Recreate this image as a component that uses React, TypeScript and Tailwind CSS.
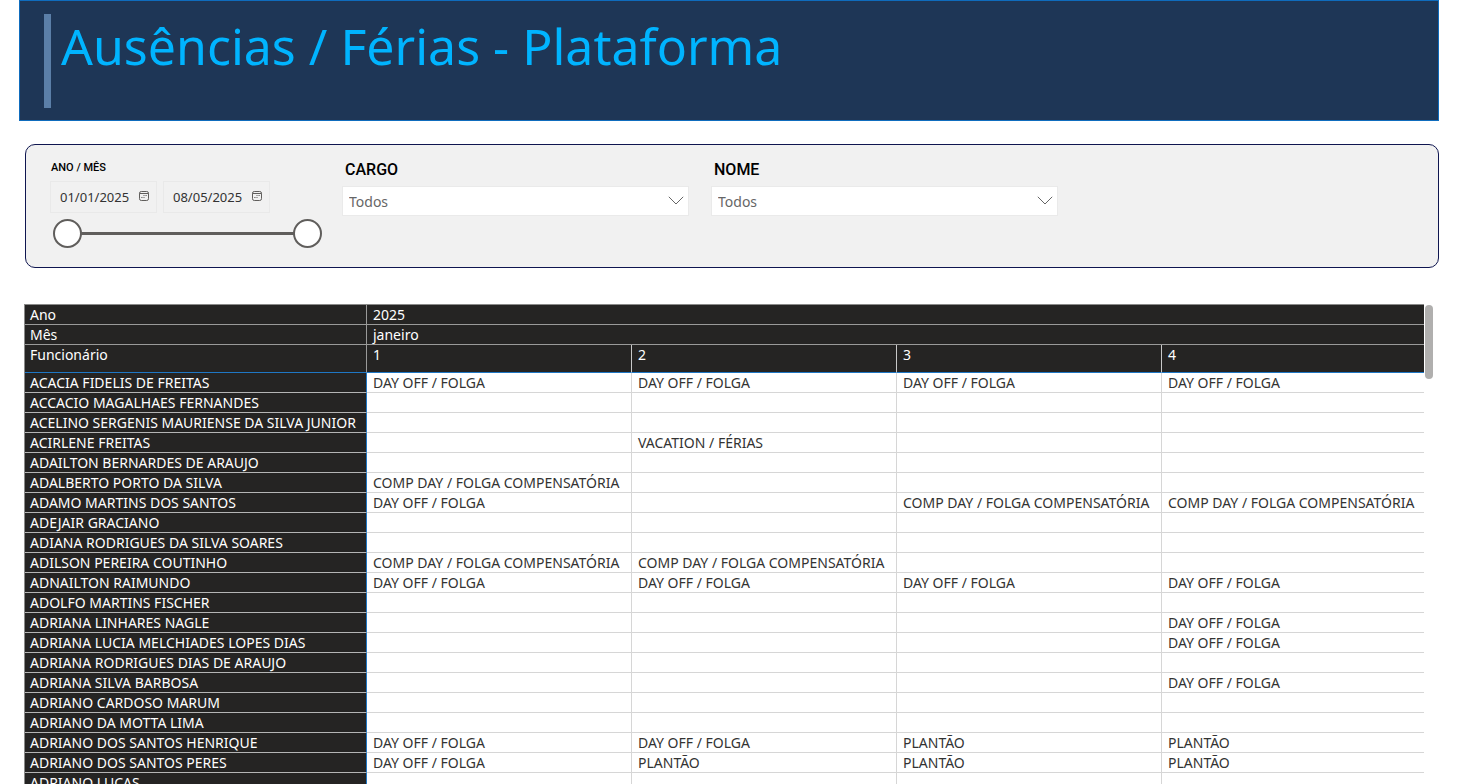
import { useState } from "react";

const DAY_OFF = "DAY OFF / FOLGA";
const COMP = "COMP DAY / FOLGA COMPENSATÓRIA";
const VACATION = "VACATION / FÉRIAS";
const DUTY = "PLANTÃO";

const days = [1, 2, 3, 4];

const employees: { name: string; days: string[] }[] = [
  { name: "ACACIA FIDELIS DE FREITAS", days: [DAY_OFF, DAY_OFF, DAY_OFF, DAY_OFF] },
  { name: "ACCACIO MAGALHAES FERNANDES", days: ["", "", "", ""] },
  { name: "ACELINO SERGENIS MAURIENSE DA SILVA JUNIOR", days: ["", "", "", ""] },
  { name: "ACIRLENE FREITAS", days: ["", VACATION, "", ""] },
  { name: "ADAILTON BERNARDES DE ARAUJO", days: ["", "", "", ""] },
  { name: "ADALBERTO PORTO DA SILVA", days: [COMP, "", "", ""] },
  { name: "ADAMO MARTINS DOS SANTOS", days: [DAY_OFF, "", COMP, COMP] },
  { name: "ADEJAIR GRACIANO", days: ["", "", "", ""] },
  { name: "ADIANA RODRIGUES DA SILVA SOARES", days: ["", "", "", ""] },
  { name: "ADILSON PEREIRA COUTINHO", days: [COMP, COMP, "", ""] },
  { name: "ADNAILTON RAIMUNDO", days: [DAY_OFF, DAY_OFF, DAY_OFF, DAY_OFF] },
  { name: "ADOLFO MARTINS FISCHER", days: ["", "", "", ""] },
  { name: "ADRIANA LINHARES NAGLE", days: ["", "", "", DAY_OFF] },
  { name: "ADRIANA LUCIA MELCHIADES LOPES DIAS", days: ["", "", "", DAY_OFF] },
  { name: "ADRIANA RODRIGUES DIAS DE ARAUJO", days: ["", "", "", ""] },
  { name: "ADRIANA SILVA BARBOSA", days: ["", "", "", DAY_OFF] },
  { name: "ADRIANO CARDOSO MARUM", days: ["", "", "", ""] },
  { name: "ADRIANO DA MOTTA LIMA", days: ["", "", "", ""] },
  { name: "ADRIANO DOS SANTOS HENRIQUE", days: [DAY_OFF, DAY_OFF, DUTY, DUTY] },
  { name: "ADRIANO DOS SANTOS PERES", days: [DAY_OFF, DUTY, DUTY, DUTY] },
  { name: "ADRIANO LUCAS", days: ["", "", "", ""] },
];

function CalendarIcon() {
  return (
    <svg viewBox="0 0 12 12" className="size-3" fill="none" stroke="#605e5c" aria-hidden="true">
      <rect x="1.5" y="1.5" width="9" height="9" rx="1.8" />
      <path d="M1.5 3.5h9" />
      <path d="M5.5 5.5h1M7.5 5.5h1.2M3.3 7.5h1.2M5.5 7.5h1" />
    </svg>
  );
}

function DateField({ label, initial }: { label: string; initial: string }) {
  const [value, setValue] = useState(initial);
  return (
    <div className="flex h-8 w-[107px] items-center border border-[#e9e9e9] pr-1.5 pl-[9px]">
      <input
        type="text"
        aria-label={label}
        value={value}
        onChange={(e) => setValue(e.target.value)}
        className="min-w-0 flex-1 bg-transparent pt-0.5 text-[13px] text-[#333333] outline-none"
      />
      <button type="button" aria-label={`Abrir calendário: ${label}`} className="pb-0.5">
        <CalendarIcon />
      </button>
    </div>
  );
}

const thumb =
  "pointer-events-none absolute inset-0 h-7 w-full appearance-none bg-transparent outline-none [&::-webkit-slider-thumb]:pointer-events-auto [&::-webkit-slider-thumb]:size-[29px] [&::-webkit-slider-thumb]:appearance-none [&::-webkit-slider-thumb]:rounded-full [&::-webkit-slider-thumb]:border-2 [&::-webkit-slider-thumb]:border-solid [&::-webkit-slider-thumb]:border-[#605e5c] [&::-webkit-slider-thumb]:bg-white";

function RangeSlider() {
  const [start, setStart] = useState(0);
  const [end, setEnd] = useState(127);
  return (
    <div className="relative ml-[3px] flex h-7 w-[269px] items-center">
      <div className="mx-3.5 h-[3px] flex-1 bg-[#605e5c]" />
      <input
        type="range"
        aria-label="Data inicial"
        min={0}
        max={127}
        value={start}
        onChange={(e) => setStart(Math.min(Number(e.target.value), end))}
        className={thumb}
      />
      <input
        type="range"
        aria-label="Data final"
        min={0}
        max={127}
        value={end}
        onChange={(e) => setEnd(Math.max(Number(e.target.value), start))}
        className={thumb}
      />
    </div>
  );
}

function Dropdown({ id, label }: { id: string; label: string }) {
  return (
    <div className="flex w-[347px] flex-col">
      <label htmlFor={id} className="pl-[3px] font-[Roboto] text-base leading-5 font-medium text-black">
        {label}
      </label>
      <div className="relative mt-1.5">
        <select
          id={id}
          defaultValue="Todos"
          className="h-[30px] w-full appearance-none border border-[#eaeaea] bg-white pt-0.5 pl-1.5 text-sm text-[#666666] outline-none"
        >
          <option>Todos</option>
        </select>
        <svg
          viewBox="0 0 16 9"
          className="pointer-events-none absolute top-2.5 right-[5px] h-[9px] w-4"
          fill="none"
          stroke="#666666"
          aria-hidden="true"
        >
          <path d="M0.8 0.8 8 8 15.2 0.8" />
        </svg>
      </div>
    </div>
  );
}

const head = "bg-[#252423] text-left align-top font-normal text-white whitespace-nowrap";

function AbsenceTable() {
  return (
    <table className="w-full table-fixed border-separate border-spacing-0 border-t border-l border-[#8a8a89] text-sm leading-[19px]">
      <colgroup>
        <col className="w-[342px]" />
        <col className="w-[265px]" />
        <col className="w-[265px]" />
        <col className="w-[265px]" />
        <col />
      </colgroup>
      <thead>
        <tr>
          <th scope="row" className={`${head} border-r border-b border-[#9a9a99] px-[5px]`}>Ano</th>
          <th scope="colgroup" colSpan={4} className={`${head} border-b border-[#9a9a99] pl-1.5`}>2025</th>
        </tr>
        <tr>
          <th scope="row" className={`${head} border-r border-b border-[#9a9a99] px-[5px]`}>Mês</th>
          <th scope="colgroup" colSpan={4} className={`${head} border-b border-[#9a9a99] pl-1.5`}>janeiro</th>
        </tr>
        <tr className="h-7">
          <th scope="col" className={`${head} border-r border-b border-r-[#9a9a99] border-b-[#1f77c4] px-[5px]`}>
            Funcionário
          </th>
          {days.map((day) => (
            <th
              key={day}
              scope="col"
              className={`${head} border-r border-b border-r-[#c8c8c8] border-b-[#1f77c4] pl-1.5 last:border-r-0`}
            >
              {day}
            </th>
          ))}
        </tr>
      </thead>
      <tbody className="leading-[18px]">
        {employees.map((employee) => (
          <tr key={employee.name} className="h-5">
            <th scope="row" className={`${head} border-r border-b border-r-[#1f77c4] border-b-[#b5b5b5] px-[5px] pt-px`}>
              {employee.name}
            </th>
            {employee.days.map((entry, i) => (
              <td
                key={days[i]}
                className="border-r border-b border-[#d6d6d6] pt-px pl-1.5 align-top whitespace-nowrap text-[#333333] last:border-r-0"
              >
                {entry}
              </td>
            ))}
          </tr>
        ))}
      </tbody>
    </table>
  );
}

export default function App() {
  return (
    <div className="flex h-screen flex-col overflow-hidden bg-white pr-[45px] pl-[19px] font-['Noto_Sans',sans-serif]">
      <header className="flex h-[121px] shrink-0 items-start border border-[#0f6cbd] bg-[#1e3656] pt-[13px] pl-6">
        <div className="h-[94px] w-[7px] shrink-0 bg-[#5b7fa8]" />
        <h1 className="pl-[10px] text-[50px] leading-[64px] whitespace-nowrap text-[#00b4ff]">
          Ausências / Férias - Plataforma
        </h1>
      </header>

      <section
        aria-label="Filtros"
        className="mt-[23px] ml-1.5 flex h-[124px] shrink-0 items-start rounded-[10px] border border-[#0f1650] bg-[#f1f1f1] pl-6"
      >
        <fieldset className="pt-[15px]">
          <legend className="float-left w-full pl-px font-[Roboto] text-[11px] leading-4 font-medium text-black">
            ANO / MÊS
          </legend>
          <div className="clear-both flex gap-1.5 pt-[5px] pb-1.5">
            <DateField label="Data inicial" initial="01/01/2025" />
            <DateField label="Data final" initial="08/05/2025" />
          </div>
          <RangeSlider />
        </fieldset>
        <div className="ml-5 flex gap-[22px] pt-[15px]">
          <Dropdown id="cargo" label="CARGO" />
          <Dropdown id="nome" label="NOME" />
        </div>
      </section>

      <main className="mt-9 mr-1.5 ml-[5px] flex min-h-0 flex-1 items-start overflow-hidden">
        <AbsenceTable />
        <div className="mt-px ml-px h-[74px] w-2 shrink-0 rounded-full bg-[#b0afae]" />
      </main>
    </div>
  );
}
